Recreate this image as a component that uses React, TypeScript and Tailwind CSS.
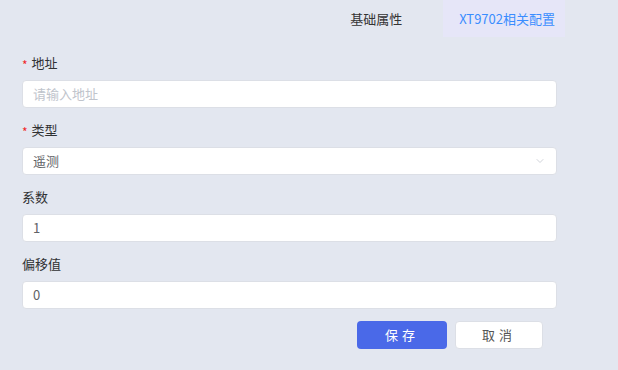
import { ChevronDown } from "lucide-react";

const fields = [
  { label: "地址", required: true, placeholder: "请输入地址", value: "" },
  { label: "类型", required: true, value: "遥测", select: true },
  { label: "系数", value: "1" },
  { label: "偏移值", value: "0" },
];

export default function App() {
  return (
    <div
      className="w-[618px] h-[370px] bg-[#e3e7f0] text-[13px] text-[#303133] overflow-hidden"
      style={{ fontFamily: '"Noto Sans CJK SC", "Noto Sans", sans-serif' }}
    >
      <div className="flex justify-end h-[37px] pr-[53px]">
        <div className="flex items-center px-4 mr-[25px] text-[#333]">基础属性</div>
        <div className="flex items-center pl-4 pr-[10px] bg-[#e6e6f8] text-[#3a8dff]">XT9702相关配置</div>
      </div>

      <div className="pt-4 pl-[22px] pr-[61px]">
        {fields.map((f) => (
          <div key={f.label} className="mb-3">
            <div className="h-5 leading-5 mb-[7px] flex items-center">
              {f.required && <span className="text-[#f02828] mr-1 text-[12px] mt-[3px]">*</span>}
              <span>{f.label}</span>
            </div>
            <div className="h-[28px] bg-white border border-[#dcdfe6] rounded-[4px] flex items-center pl-[10px] pr-[10px]">
              {f.value ? (
                <span className="flex-1 text-[#606266]">{f.value}</span>
              ) : (
                <span className="flex-1 text-[#c0c4cc]">{f.placeholder}</span>
              )}
              {f.select && <ChevronDown size={12} strokeWidth={1.5} className="text-[#c0c4cc]" />}
            </div>
          </div>
        ))}

        <div className="flex justify-end gap-2 mt-[2px] pr-[14px]">
          <button className="w-[90px] h-[28px] rounded-[4px] bg-[#4a69e8] text-white tracking-[4px]">保存</button>
          <button className="w-[88px] h-[28px] rounded-[4px] bg-white border border-[#dcdfe6] text-[#555] tracking-[4px]">取消</button>
        </div>
      </div>
    </div>
  );
}
